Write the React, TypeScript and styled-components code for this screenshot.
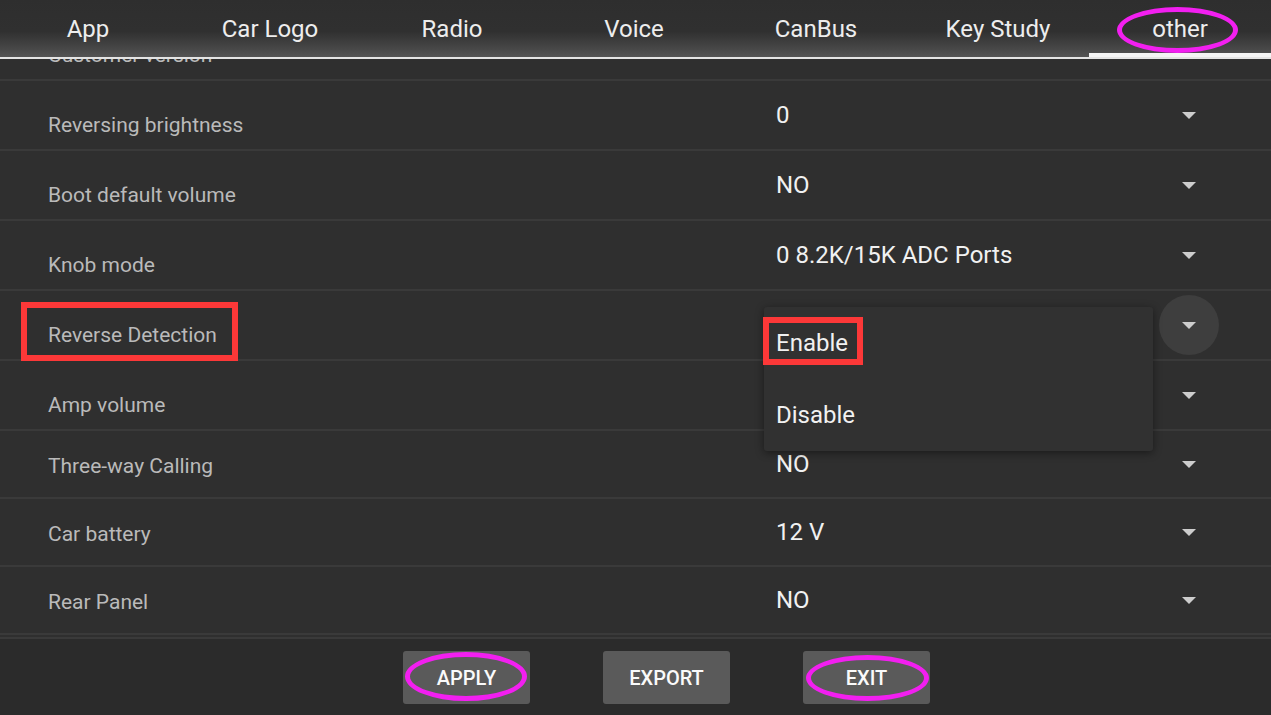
import React from 'react';
import styled, { createGlobalStyle } from 'styled-components';

const GlobalStyle = createGlobalStyle`
  html, body { margin: 0; padding: 0; background: #2f2f2f; }
  body { font-family: Roboto, "Noto Sans", Arial, sans-serif; }
  * { box-sizing: border-box; }
`;

const Page = styled.div`
  position: relative;
  width: 1271px;
  height: 715px;
  overflow: hidden;
  display: flex;
  flex-direction: column;
  background: #2f2f2f;
`;

const TabBar = styled.nav`
  position: relative;
  z-index: 3;
  flex: 0 0 59px;
  width: 1274px;
  margin-left: -3px;
  display: grid;
  grid-template-columns: repeat(7, 182px);
  background: linear-gradient(to bottom, #2e2e2e 0%, #303030 55%, #474747 85%, #545454 100%);
  border-bottom: 2px solid #e4e4e4;
`;

const Tab = styled.div<{ $active?: boolean }>`
  position: relative;
  display: flex;
  align-items: center;
  justify-content: center;
  font-size: 24px;
  color: #ededed;
  &::after {
    content: '';
    display: ${(p) => (p.$active ? 'block' : 'none')};
    position: absolute;
    left: 0;
    right: 0;
    bottom: 0;
    height: 4px;
    background: #f4f4f4;
  }
`;

const List = styled.div`
  flex: 1 1 auto;
  overflow: hidden;
  background: #2f2f2f;
`;

const ListInner = styled.div`
  margin-top: -48px;
`;

const Row = styled.div<{ $h: number }>`
  position: relative;
  display: grid;
  grid-template-columns: 728px 1fr 48px;
  align-items: center;
  height: ${(p) => p.$h}px;
  padding: 0 58px 0 48px;
  border-bottom: 2px solid #3a3a3a;
`;

const Label = styled.div<{ $shift?: boolean }>`
  font-size: 21px;
  color: #bababa;
  padding-top: ${(p) => (p.$shift ? 20 : 3)}px;
  white-space: nowrap;
`;

const Value = styled.div`
  font-size: 24px;
  color: #f1f1f1;
  white-space: nowrap;
`;

const ArrowCell = styled.div<{ $pressed?: boolean }>`
  position: relative;
  display: flex;
  align-items: center;
  justify-content: center;
  height: 100%;
  &::before {
    content: '';
    display: ${(p) => (p.$pressed ? 'block' : 'none')};
    position: absolute;
    left: 50%;
    top: 50%;
    width: 60px;
    height: 60px;
    margin: -30px 0 0 -30px;
    border-radius: 50%;
    background: #3e3e3e;
  }
`;

const Arrow = styled.span`
  position: relative;
  width: 0;
  height: 0;
  border-left: 7px solid transparent;
  border-right: 7px solid transparent;
  border-top: 7px solid #cdcdcd;
`;

const Popup = styled.div`
  position: absolute;
  z-index: 2;
  left: 764px;
  top: 16px;
  width: 389px;
  background: #313131;
  border-radius: 3px;
  box-shadow: 0 2px 8px rgba(0, 0, 0, 0.45);
`;

const PopupItem = styled.div`
  height: 72px;
  display: flex;
  align-items: center;
  padding-left: 12px;
  font-size: 24px;
  color: #f1f1f1;
`;

const BottomBar = styled.footer`
  flex: 0 0 78px;
  display: flex;
  align-items: center;
  gap: 73px;
  padding-left: 403px;
  background: #2b2b2b;
  border-top: 2px solid #3a3a3a;
`;

const Button = styled.button`
  width: 127px;
  height: 53px;
  border: none;
  border-radius: 3px;
  background: #5a5a5a;
  color: #fafafa;
  font-family: Roboto, "Noto Sans", Arial, sans-serif;
  font-weight: 500;
  font-size: 20px;
  padding: 2px 0 0;
`;

const Mark = styled.div<{ $x: number; $y: number; $w: number; $h: number; $oval?: boolean }>`
  position: absolute;
  z-index: 5;
  left: ${(p) => p.$x}px;
  top: ${(p) => p.$y}px;
  width: ${(p) => p.$w}px;
  height: ${(p) => p.$h}px;
  border: ${(p) => (p.$oval ? '5px solid #f21ff0' : '6px solid #fc3838')};
  border-radius: ${(p) => (p.$oval ? '50%' : '0')};
  pointer-events: none;
`;

type Item = { label: string; value?: string; h: number; shift: boolean; open?: boolean };

const items: Item[] = [
  { label: 'Customer version', h: 70, shift: true },
  { label: 'Reversing brightness', value: '0', h: 70, shift: true },
  { label: 'Boot default volume', value: 'NO', h: 70, shift: true },
  { label: 'Knob mode', value: '0 8.2K/15K ADC Ports', h: 70, shift: true },
  { label: 'Reverse Detection', h: 70, shift: true, open: true },
  { label: 'Amp volume', h: 70, shift: true },
  { label: 'Three-way Calling', value: 'NO', h: 68, shift: false },
  { label: 'Car battery', value: '12 V', h: 68, shift: false },
  { label: 'Rear Panel', value: 'NO', h: 68, shift: false },
];

const tabs = ['App', 'Car Logo', 'Radio', 'Voice', 'CanBus', 'Key Study', 'other'];

export default function App() {
  return (
    <>
      <GlobalStyle />
      <Page>
        <TabBar>
          {tabs.map((t) => (
            <Tab key={t} $active={t === 'other'}>
              {t}
            </Tab>
          ))}
        </TabBar>
        <List>
          <ListInner>
            {items.map((it) => (
              <Row key={it.label} $h={it.h}>
                <Label $shift={it.shift}>{it.label}</Label>
                <Value>{it.value ?? ''}</Value>
                <ArrowCell $pressed={it.open}>
                  <Arrow />
                </ArrowCell>
                {it.open && (
                  <Popup>
                    <PopupItem>Enable</PopupItem>
                    <PopupItem>Disable</PopupItem>
                  </Popup>
                )}
              </Row>
            ))}
          </ListInner>
        </List>
        <BottomBar>
          <Button>APPLY</Button>
          <Button>EXPORT</Button>
          <Button>EXIT</Button>
        </BottomBar>
        <Mark $x={21} $y={302} $w={217} $h={59} />
        <Mark $x={763} $y={317} $w={100} $h={48} />
        <Mark $oval $x={1117} $y={7} $w={121} $h={46} />
        <Mark $oval $x={405} $y={652} $w={122} $h={49} />
        <Mark $oval $x={806} $y={655} $w={123} $h={46} />
      </Page>
    </>
  );
}
